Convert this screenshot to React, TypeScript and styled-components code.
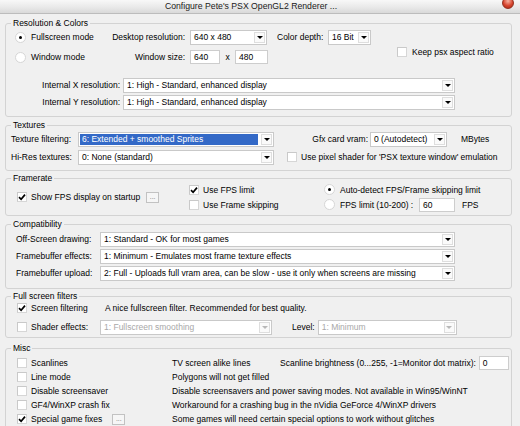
import styled, { createGlobalStyle } from "styled-components";

const GlobalStyle = createGlobalStyle`
  html, body {
    margin: 0;
    padding: 0;
    background: #f0f0f0;
  }
  body {
    font-family: "Liberation Sans", Arial, sans-serif;
    font-size: 8.5px;
    color: #000;
  }
`;

const Window = styled.div`
  width: 520px;
  height: 426px;
  overflow: hidden;
  background: #f0f0f0;
  display: flex;
  flex-direction: column;
`;

const TitleBar = styled.div`
  height: 14px;
  flex: none;
  box-sizing: border-box;
  display: grid;
  grid-template-columns: 1fr 18px;
  align-items: start;
  background: linear-gradient(#f8f8f8, #e9e9e9 55%, #d9d9d9);
  border-bottom: 1px solid #bcbcbc;
`;

const Title = styled.div`
  text-align: center;
  font-size: 8.7px;
  line-height: 13px;
  color: #1a1a1a;
`;

const CloseDot = styled.div`
  width: 12px;
  height: 12px;
  margin-top: -3px;
  border-radius: 50%;
  box-sizing: border-box;
  border: 1px solid #93301f;
  background: radial-gradient(circle at 50% 30%, #f6b3a3, #d7452f 55%, #a22514);
`;

const Body = styled.div`
  display: flex;
  flex-direction: column;
  padding: 0 8px 0 5px;
`;

const Group = styled.fieldset<{ $h: number; $mt: number }>`
  margin: ${(p) => p.$mt}px 0 0;
  padding: 0 6px 0 5px;
  height: ${(p) => p.$h}px;
  box-sizing: border-box;
  border: 1px solid #d3d3d3;
  border-radius: 3px;
  min-width: 0;
  flex: none;
`;

const Legend = styled.legend`
  padding: 0 2px;
  margin: 0;
  font-size: 8.5px;
  line-height: 10px;
`;

const Content = styled.div<{ $pl?: number; $mt?: number; $gap?: number }>`
  display: flex;
  flex-direction: column;
  padding-left: ${(p) => p.$pl ?? 4}px;
  margin-top: ${(p) => p.$mt ?? 0}px;
  gap: ${(p) => p.$gap ?? 0}px;
`;

const Row = styled.div<{ $h?: number }>`
  display: flex;
  align-items: center;
  height: ${(p) => p.$h ?? 16}px;
  white-space: nowrap;
`;

const Split = styled.div`
  display: flex;
  align-items: flex-start;
`;

const Stack = styled.div<{ $gap?: number; $w?: number; $mt?: number }>`
  display: flex;
  flex-direction: column;
  gap: ${(p) => p.$gap ?? 0}px;
  margin-top: ${(p) => p.$mt ?? 0}px;
  ${(p) => (p.$w ? `width: ${p.$w}px;` : "")}
  flex: none;
`;

const Text = styled.span<{ $w?: number; $right?: boolean; $center?: boolean; $ml?: number; $pl?: number; $dim?: boolean }>`
  display: inline-block;
  flex: none;
  box-sizing: border-box;
  white-space: nowrap;
  ${(p) => (p.$w ? `width: ${p.$w}px;` : "")}
  text-align: ${(p) => (p.$right ? "right" : p.$center ? "center" : "left")};
  margin-left: ${(p) => p.$ml ?? 0}px;
  padding-left: ${(p) => p.$pl ?? 0}px;
  color: ${(p) => (p.$dim ? "#a8a8a8" : "#000")};
  line-height: 12px;
`;

const Option = styled.label<{ $w?: number; $ml?: number; $gap?: number }>`
  display: flex;
  align-items: center;
  flex: none;
  gap: ${(p) => p.$gap ?? 5}px;
  ${(p) => (p.$w ? `width: ${p.$w}px;` : "")}
  margin-left: ${(p) => p.$ml ?? 0}px;
  line-height: 12px;
`;

const RadioBox = styled.span<{ $on?: boolean }>`
  width: 11px;
  height: 11px;
  flex: none;
  box-sizing: border-box;
  border-radius: 50%;
  border: 1px solid #d6d6d6;
  background: #fff;
  display: flex;
  align-items: center;
  justify-content: center;
  &::after {
    content: "";
    width: 3px;
    height: 3px;
    border-radius: 50%;
    background: ${(p) => (p.$on ? "#000" : "transparent")};
  }
`;

const CheckBox = styled.span`
  width: 10px;
  height: 10px;
  flex: none;
  box-sizing: border-box;
  border: 1px solid #d6d6d6;
  border-top-color: #c9c9c9;
  border-left-color: #c9c9c9;
  background: #fff;
  display: flex;
  align-items: center;
  justify-content: center;
`;

const ComboBox = styled.div<{ $w: number; $ml?: number }>`
  width: ${(p) => p.$w}px;
  height: 15px;
  margin-left: ${(p) => p.$ml ?? 0}px;
  flex: none;
  box-sizing: border-box;
  border: 1px solid #c9c9c9;
  background: #fff;
  display: flex;
  align-items: stretch;
`;

const ComboText = styled.div<{ $selected?: boolean; $dim?: boolean }>`
  flex: 1;
  min-width: 0;
  margin: 1px 2px 1px 1px;
  padding-left: 2px;
  line-height: 11px;
  overflow: hidden;
  white-space: nowrap;
  background: ${(p) => (p.$selected ? "#3369c7" : "transparent")};
  color: ${(p) => (p.$selected ? "#fff" : p.$dim ? "#a8a8a8" : "#000")};
`;

const ArrowBox = styled.div`
  width: 11px;
  margin: 1px;
  flex: none;
  box-sizing: border-box;
  border: 1px solid #dedede;
  background: #fafafa;
  display: flex;
  align-items: center;
  justify-content: center;
`;

const Arrow = styled.span<{ $dim?: boolean }>`
  width: 0;
  height: 0;
  border-left: 3px solid transparent;
  border-right: 3px solid transparent;
  border-top: 3px solid ${(p) => (p.$dim ? "#b8b8b8" : "#000")};
`;

const Field = styled.div<{ $w: number; $ml?: number }>`
  width: ${(p) => p.$w}px;
  height: 14px;
  margin-left: ${(p) => p.$ml ?? 0}px;
  flex: none;
  box-sizing: border-box;
  border: 1px solid #cdcdcd;
  background: #fff;
  padding-left: 3px;
  line-height: 12px;
`;

const DotsButton = styled.span<{ $ml?: number }>`
  width: 13px;
  height: 11px;
  margin-left: ${(p) => p.$ml ?? 0}px;
  flex: none;
  box-sizing: border-box;
  border: 1px solid #c2c2c2;
  background: #f6f6f6;
  color: #777;
  font-size: 7px;
  line-height: 7px;
  text-align: center;
`;

const Tick = () => (
  <svg width="8" height="8" viewBox="0 0 8 8">
    <path d="M1 4.2 L3.1 6.3 L7 1.6" fill="none" stroke="#000" strokeWidth="1.7" />
  </svg>
);

function Radio({ on, label, ml, w }: { on?: boolean; label: string; ml?: number; w?: number }) {
  return (
    <Option $ml={ml} $w={w}>
      <RadioBox $on={on} />
      <span>{label}</span>
    </Option>
  );
}

function Check({ on, label, ml, w, gap }: { on?: boolean; label: string; ml?: number; w?: number; gap?: number }) {
  return (
    <Option $ml={ml} $w={w} $gap={gap}>
      <CheckBox>{on && <Tick />}</CheckBox>
      <span>{label}</span>
    </Option>
  );
}

function Combo({ w, ml, value, selected, dim }: { w: number; ml?: number; value: string; selected?: boolean; dim?: boolean }) {
  return (
    <ComboBox $w={w} $ml={ml}>
      <ComboText $selected={selected} $dim={dim}>
        {value}
      </ComboText>
      <ArrowBox>
        <Arrow $dim={dim} />
      </ArrowBox>
    </ComboBox>
  );
}

const miscRows = [
  { label: "Scanlines", on: false, desc: "TV screen alike lines" },
  { label: "Line mode", on: false, desc: "Polygons will not get filled" },
  {
    label: "Disable screensaver",
    on: false,
    desc: "Disable screensavers and power saving modes. Not available in Win95/WinNT",
  },
  {
    label: "GF4/WinXP crash fix",
    on: false,
    desc: "Workaround for a crashing bug in the nVidia GeForce 4/WinXP drivers",
  },
  {
    label: "Special game fixes",
    on: true,
    desc: "Some games will need certain special options to work without glitches",
  },
];

export default function App() {
  return (
    <>
      <GlobalStyle />
      <Window>
        <TitleBar>
          <Title>Configure Pete's PSX OpenGL2 Renderer ...</Title>
          <CloseDot />
        </TitleBar>
        <Body>
          <Group $h={99} $mt={4}>
            <Legend>Resolution &amp; Colors</Legend>
            <Content $mt={1}>
              <Split>
                <Stack $gap={4}>
                  <Row>
                    <Radio on label="Fullscreen mode" w={94} />
                    <Text $w={76} $right>
                      Desktop resolution:
                    </Text>
                    <Combo w={77} ml={5} value="640 x  480" />
                    <Text $ml={10} $w={48}>
                      Color depth:
                    </Text>
                    <Combo w={43} ml={3} value="16 Bit" />
                  </Row>
                  <Row>
                    <Radio label="Window mode" w={94} />
                    <Text $w={76} $right>
                      Window size:
                    </Text>
                    <Field $w={30} $ml={5}>
                      640
                    </Field>
                    <Text $w={15} $center>
                      x
                    </Text>
                    <Field $w={33}>480</Field>
                  </Row>
                </Stack>
                <Stack $mt={18}>
                  <Row $h={10}>
                    <Check label="Keep psx aspect ratio" ml={26} />
                  </Row>
                </Stack>
              </Split>
              <Stack $gap={1} $mt={12}>
                <Row>
                  <Text $w={105} $right>
                    Internal X resolution:
                  </Text>
                  <Combo w={332} ml={3} value="1: High - Standard, enhanced display" />
                </Row>
                <Row>
                  <Text $w={105} $right>
                    Internal Y resolution:
                  </Text>
                  <Combo w={332} ml={3} value="1: High - Standard, enhanced display" />
                </Row>
              </Stack>
            </Content>
          </Group>

          <Group $h={51} $mt={3}>
            <Legend>Textures</Legend>
            <Content $pl={0} $mt={1} $gap={2}>
              <Row>
                <Text $w={67}>Texture filtering:</Text>
                <Combo w={196} value="6: Extended + smoothed Sprites" selected />
                <Text $w={94} $right>
                  Gfx card vram:
                </Text>
                <Combo w={77} ml={2} value="0 (Autodetect)" />
                <Text $ml={14}>MBytes</Text>
              </Row>
              <Row>
                <Text $w={67}>Hi-Res textures:</Text>
                <Combo w={196} value="0: None (standard)" />
                <Check ml={13} gap={4} label="Use pixel shader for 'PSX texture window' emulation" />
              </Row>
            </Content>
          </Group>

          <Group $h={43} $mt={2}>
            <Legend>Framerate</Legend>
            <Content $mt={-1}>
              <Row $h={30}>
                <Stack $w={174}>
                  <Row $h={14}>
                    <Check on ml={2} gap={4} label="Show FPS display on startup" />
                    <DotsButton $ml={6}>...</DotsButton>
                  </Row>
                </Stack>
                <Stack $w={135}>
                  <Row $h={15}>
                    <Check on gap={4} label="Use FPS limit" />
                  </Row>
                  <Row $h={15}>
                    <Check gap={4} label="Use Frame skipping" />
                  </Row>
                </Stack>
                <Stack>
                  <Row $h={15}>
                    <Radio on label="Auto-detect FPS/Frame skipping limit" />
                  </Row>
                  <Row $h={15}>
                    <Radio label="FPS limit (10-200) :" w={95} />
                    <Field $w={36}>60</Field>
                    <Text $ml={7}>FPS</Text>
                  </Row>
                </Stack>
              </Row>
            </Content>
          </Group>

          <Group $h={70} $mt={3}>
            <Legend>Compatibility</Legend>
            <Content $mt={2} $gap={1}>
              <Row>
                <Text $w={85} $pl={1}>
                  Off-Screen drawing:
                </Text>
                <Combo w={355} value="1: Standard - OK for most games" />
              </Row>
              <Row>
                <Text $w={85} $pl={1}>
                  Framebuffer effects:
                </Text>
                <Combo w={355} value="1: Minimum - Emulates most frame texture effects" />
              </Row>
              <Row>
                <Text $w={85} $pl={1}>
                  Framebuffer upload:
                </Text>
                <Combo w={355} value="2: Full - Uploads full vram area, can be slow - use it only when screens are missing" />
              </Row>
            </Content>
          </Group>

          <Group $h={47} $mt={2}>
            <Legend>Full screen filters</Legend>
            <Content $gap={4}>
              <Row $h={14}>
                <Check on ml={2} gap={4} w={88} label="Screen filtering" />
                <Text>A nice fullscreen filter. Recommended for best quality.</Text>
              </Row>
              <Row>
                <Check ml={2} gap={4} w={83} label="Shader effects:" />
                <Combo w={172} value="1: Fullscreen smoothing" dim />
                <Text $ml={20}>Level:</Text>
                <Combo w={139} ml={3} value="1: Minimum" dim />
              </Row>
            </Content>
          </Group>

          <Group $h={100} $mt={5}>
            <Legend>Misc</Legend>
            <Content $mt={3}>
              {miscRows.map((r, i) => (
                <Row $h={14} key={r.label}>
                  <Option $w={155} $gap={4} $ml={2}>
                    <CheckBox>{r.on && <Tick />}</CheckBox>
                    <span>{r.label}</span>
                    {i === miscRows.length - 1 && <DotsButton $ml={6}>...</DotsButton>}
                  </Option>
                  {i === 0 ? (
                    <>
                      <Text $w={108}>{r.desc}</Text>
                      <Text>Scanline brightness (0...255, -1=Monitor dot matrix):</Text>
                      <Field $w={30} $ml={3}>
                        0
                      </Field>
                    </>
                  ) : (
                    <Text>{r.desc}</Text>
                  )}
                </Row>
              ))}
            </Content>
          </Group>
        </Body>
      </Window>
    </>
  );
}
